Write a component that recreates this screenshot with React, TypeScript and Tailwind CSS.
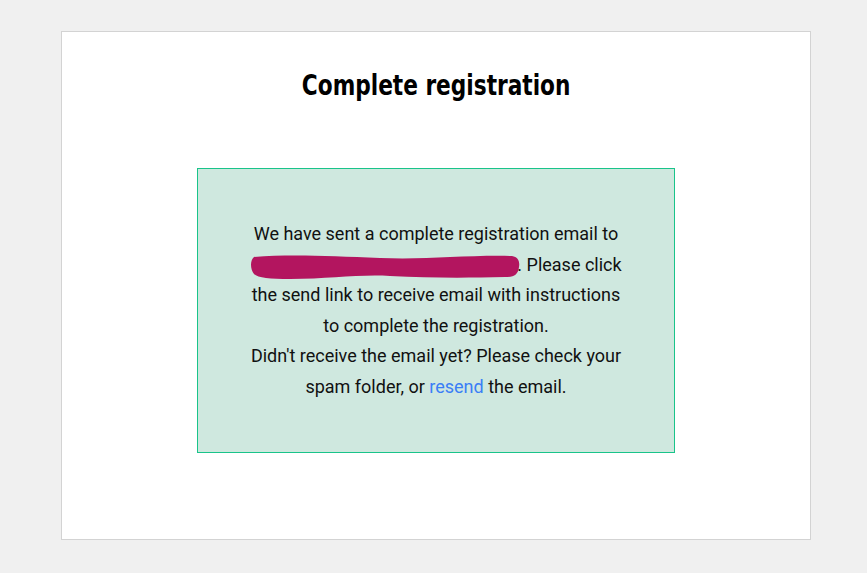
import React from "react";

const Redacted = () => (
  <svg width="270" height="27" viewBox="0 0 270 27" className="inline-block align-[-9px] -mr-[3px]">
    <path
      d="M4 4 C40 1 80 3 130 5 C175 7 215 2 262 3 C268 4 270 8 269 14 C268 22 264 24 255 24 C215 25 180 25 140 23 C110 21 80 26 40 26 C20 26 8 25 4 21 C0 16 0 7 4 4 Z"
      fill="#b3155f"
    />
  </svg>
);

const App = () => {
  return (
    <div className="min-h-screen w-full bg-[#f0f0f0] pt-[31px] pl-[61px]">
      <div className="w-[750px] h-[509px] bg-white border border-[#d3d3d3] flex flex-col items-center">
        <h1
          className="mt-[36px] text-[28px] leading-[36px] font-bold text-black scale-x-[0.86]"
          style={{ fontFamily: '"DejaVu Sans Condensed", "DejaVu Sans", sans-serif' }}
        >
          Complete registration
        </h1>
        <div className="mt-[64px] w-[478px] bg-[#cfe8df] border border-[#19c48a] px-[20px] py-[50px]">
          <p className="text-center text-[18px] leading-[30.5px] text-[#111111] font-['Roboto',sans-serif]">
            We have sent a complete registration email to
            <br />
            <Redacted />. Please click
            <br />
            the send link to receive email with instructions
            <br />
            to complete the registration.
            <br />
            Didn't receive the email yet? Please check your
            <br />
            spam folder, or{" "}
            <a href="#" className="text-[#3a7ef6]">
              resend
            </a>{" "}
            the email.
          </p>
        </div>
      </div>
    </div>
  );
};

export default App;
